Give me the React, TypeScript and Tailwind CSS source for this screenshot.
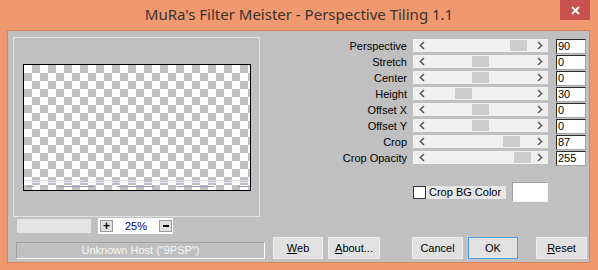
import React from "react";

type SliderDef = { label: string; value: number; min: number; max: number };

const sliders: SliderDef[] = [
  { label: "Perspective", value: 90, min: -100, max: 100 },
  { label: "Stretch", value: 0, min: -100, max: 100 },
  { label: "Center", value: 0, min: -100, max: 100 },
  { label: "Height", value: 30, min: 0, max: 100 },
  { label: "Offset X", value: 0, min: -100, max: 100 },
  { label: "Offset Y", value: 0, min: -100, max: 100 },
  { label: "Crop", value: 87, min: 0, max: 100 },
  { label: "Crop Opacity", value: 255, min: 0, max: 255 },
];

const ui = "font-['Liberation_Sans',Arial,sans-serif] text-[11px]";

function Chevron({ right = false }: { right?: boolean }) {
  return (
    <svg width="6" height="9" viewBox="0 0 6 9" aria-hidden>
      <path
        d={right ? "M1 1 L4.6 4.5 L1 8" : "M5 1 L1.4 4.5 L5 8"}
        stroke="#5a5a5a"
        strokeWidth="1.6"
        fill="none"
      />
    </svg>
  );
}

function SliderRow({ s }: { s: SliderDef }) {
  const frac = (s.value - s.min) / (s.max - s.min);
  return (
    <div className="flex h-[16px] items-start">
      <span className="w-[147px] text-right leading-[14px] text-black">{s.label}</span>
      {/* track */}
      <div className="ml-[6px] flex h-[13px] w-[135px] bg-[#f0f0f0]">
        <div className="flex w-[17px] items-center justify-center pl-[1px]">
          <Chevron />
        </div>
        <div className="relative flex-1">
          <div
            className="absolute top-[1px] h-[11px] w-[17px] bg-[#cdcdcd]"
            style={{ left: `${Math.round(frac * 84)}px` }}
          />
        </div>
        <div className="flex w-[17px] items-center justify-center">
          <Chevron right />
        </div>
      </div>
      <div className="ml-[8px] h-[15px] w-[30px] border-l border-t border-b border-r border-l-[#2a2a2a] border-t-[#2a2a2a] border-r-[#a5a5a5] border-b-[#a5a5a5] bg-white pl-[1px] leading-[13px] text-black">
        {s.value}
      </div>
    </div>
  );
}

function Btn({ children, w, ml, primary = false }: { children: React.ReactNode; w: string; ml: string; primary?: boolean }) {
  return (
    <button
      type="button"
      className={`${w} ${ml} flex h-[22px] items-center justify-center border bg-[#e1e1e1] text-black ${
        primary ? "border-[#4a9fe8]" : "border-[#ededed]"
      }`}
    >
      {children}
    </button>
  );
}

export default function App() {
  return (
    <div className={`h-[270px] w-[598px] overflow-hidden bg-[#f0996f] ${ui}`}>
      {/* Title bar */}
      <div className="relative flex h-[30px] items-center justify-center pb-[2px]">
        <span className="font-['Noto_Sans',sans-serif] text-[15px] text-[#3a3230]">
          MuRa's Filter Meister - Perspective Tiling 1.1
        </span>
        <div className="absolute right-[8px] top-0 flex h-[20px] w-[30px] items-center justify-center bg-[#c8504e]">
          <svg width="9" height="9" viewBox="0 0 9 9" aria-hidden>
            <path d="M1 1 L8 8 M8 1 L1 8" stroke="white" strokeWidth="1.8" />
          </svg>
        </div>
      </div>

      {/* Client area */}
      <div className="ml-[7px] mr-[8px] h-[233px] border border-[#d7845e] bg-[#c0c0c0]">
        <div className="flex h-full flex-col">
          <div className="flex flex-1">
            {/* Left: preview */}
            <div className="flex w-[252px] flex-col">
              <div className="ml-[5px] mt-[6px] h-[180px] w-[247px] border border-[#e2e2e2] pl-[9px] pt-[26px]">
                <div className="relative h-[127px] w-[228px] border border-black bg-[conic-gradient(#c0c0c0_25%,#ffffff_0_50%,#c0c0c0_0_75%,#ffffff_0)] bg-[length:16px_16px]">
                  <svg className="absolute inset-0" width="226" height="125" viewBox="0 0 226 125" aria-hidden>
                    <path d="M0 115.5 H60 M70 115.5 H120 M128 115.5 H200 M205 115.5 H226" stroke="#dcdcf0" strokeWidth="1" />
                    <path d="M0 117.5 H226" stroke="#e8e8f4" strokeWidth="1" />
                    <path d="M2 121.5 H10 M33 121.5 H70 M93 121.5 H130 M153 121.5 H190 M214 121.5 H224" stroke="#9a9ab8" strokeWidth="1" />
                    <path d="M88 119.5 L94 116.5" stroke="#b4b4cc" strokeWidth="1" />
                  </svg>
                </div>
              </div>
              <div className="mt-[1px] flex h-[16px] items-center">
                <div className="ml-[9px] h-[14px] w-[74px] bg-[#e4e4e4]" />
                <div className="ml-[7px] flex h-[16px] w-[75px] items-center bg-white">
                  <div className="ml-[2px] flex h-[12px] w-[13px] items-center justify-center border border-[#9a9a9a] bg-[#e1e1e1] text-[12px] font-bold leading-none text-black">
                    +
                  </div>
                  <span className="flex-1 text-center text-[#000080]">25%</span>
                  <div className="mr-[1px] flex h-[12px] w-[13px] items-center justify-center border border-[#9a9a9a] bg-[#e1e1e1]">
                    <div className="h-[2px] w-[6px] bg-black" />
                  </div>
                </div>
              </div>
            </div>

            {/* Right: sliders */}
            <div className="flex flex-col pt-[8px]">
              {sliders.map((s) => (
                <SliderRow key={s.label} s={s} />
              ))}
              <div className="mt-[15px] flex h-[20px] items-center">
                <div className="ml-[153px] h-[13px] w-[13px] border border-[#333333] bg-white" />
                <span className="h-[13px] w-[80px] bg-[#e6e6e6] pl-[3px] leading-[13px] text-black">Crop BG Color</span>
                <div className="ml-[6px] h-[20px] w-[36px] border border-l-[#a0a0a0] border-t-[#a0a0a0] border-r-[#f4f4f4] border-b-[#f4f4f4] bg-white" />
              </div>
            </div>
          </div>

          {/* Bottom row */}
          <div className="flex items-end pb-[3px]">
            <div className="ml-[8px] flex h-[17px] w-[249px] items-center justify-center border border-l-[#a0a0a0] border-t-[#a0a0a0] border-r-white border-b-white text-[#f6f6f6]">
              Unknown Host ("9PSP")
            </div>
            <Btn w="w-[50px]" ml="ml-[8px]">
              <span className="underline">W</span>eb
            </Btn>
            <Btn w="w-[52px]" ml="ml-[5px]">
              <span className="underline">A</span>bout...
            </Btn>
            <Btn w="w-[51px]" ml="ml-[32px]">
              Cancel
            </Btn>
            <Btn w="w-[50px]" ml="ml-[5px]" primary>
              OK
            </Btn>
            <Btn w="w-[51px]" ml="ml-[18px]">
              <span className="underline">R</span>eset
            </Btn>
          </div>
        </div>
      </div>
    </div>
  );
}
